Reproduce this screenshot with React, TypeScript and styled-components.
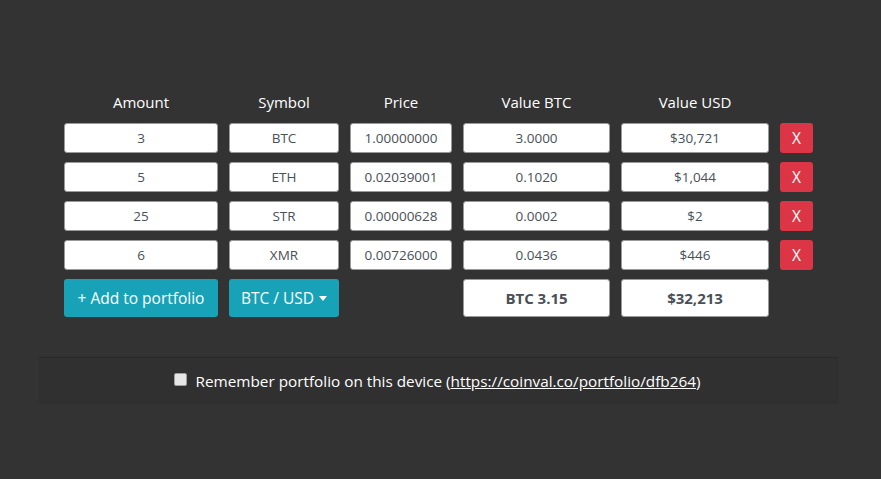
import React from "react";
import styled, { createGlobalStyle } from "styled-components";

const Global = createGlobalStyle`
  html, body { margin: 0; padding: 0; background: #333333; }
  body { font-family: "Open Sans", "Noto Sans", sans-serif; color: #fff; }
`;

const Page = styled.div`
  width: 881px;
  height: 479px;
  background: #333333;
  padding-top: 91px;
  box-sizing: border-box;
`;

const Container = styled.div`
  width: 800px;
  margin-left: 39px;
`;

const Grid = styled.div`
  display: grid;
  grid-template-columns: 154px 110px 102px 147px 148px 33px;
  grid-template-rows: 23px repeat(4, 30px) 38px;
  column-gap: 11px;
  row-gap: 9px;
  margin-left: 25px;
`;

const Header = styled.div`
  text-align: center;
  font-size: 15px;
  line-height: 23px;
  color: #fff;
`;

const Cell = styled.div<{ $bold?: boolean }>`
  background: #fff;
  border: 1px solid #9a9a9a;
  border-radius: 3px;
  box-sizing: border-box;
  display: flex;
  align-items: center;
  justify-content: center;
  color: #495057;
  font-size: ${(p) => (p.$bold ? "15px" : "13.5px")};
  font-weight: ${(p) => (p.$bold ? 700 : 400)};
  height: 100%;
`;

const RemoveButton = styled.button`
  background: #dc3545;
  border: none;
  border-radius: 3px;
  color: #fff;
  font-family: inherit;
  font-size: 15.5px;
  padding: 0;
  height: 100%;
  width: 100%;
  cursor: pointer;
`;

const ActionButton = styled.button`
  background: #17a2b8;
  border: none;
  border-radius: 3px;
  color: #fff;
  font-family: inherit;
  font-size: 15.5px;
  padding: 0;
  height: 38px;
  display: flex;
  align-items: center;
  justify-content: center;
  gap: 5px;
  cursor: pointer;
`;

const Caret = styled.span`
  display: inline-block;
  width: 0;
  height: 0;
  border-left: 4px solid transparent;
  border-right: 4px solid transparent;
  border-top: 5px solid #fff;
  margin-top: 1px;
`;

const TotalCell = styled(Cell)`
  height: 38px;
`;

const Spacer = styled.div``;

const Footer = styled.div`
  margin-top: 40px;
  background: #303030;
  border-top: 1px solid #292929;
  height: 47px;
  display: flex;
  align-items: center;
  justify-content: center;
  font-size: 15.3px;
  color: #fff;
  box-sizing: border-box;
  padding-right: 4px;
`;

const Check = styled.span`
  display: inline-block;
  width: 11px;
  height: 11px;
  background: #e6e6e6;
  border: 1px solid #a0a0a0;
  border-radius: 2px;
  margin-right: 9px;
  margin-top: -3px;
`;

const Link = styled.a`
  color: #fff;
  text-decoration: underline;
`;

const rows = [
  { amount: "3", symbol: "BTC", price: "1.00000000", btc: "3.0000", usd: "$30,721" },
  { amount: "5", symbol: "ETH", price: "0.02039001", btc: "0.1020", usd: "$1,044" },
  { amount: "25", symbol: "STR", price: "0.00000628", btc: "0.0002", usd: "$2" },
  { amount: "6", symbol: "XMR", price: "0.00726000", btc: "0.0436", usd: "$446" },
];

export default function App() {
  return (
    <Page>
      <Global />
      <Container>
        <Grid>
          <Header>Amount</Header>
          <Header>Symbol</Header>
          <Header>Price</Header>
          <Header>Value BTC</Header>
          <Header>Value USD</Header>
          <Spacer />
          {rows.map((r) => (
            <React.Fragment key={r.symbol}>
              <Cell>{r.amount}</Cell>
              <Cell>{r.symbol}</Cell>
              <Cell>{r.price}</Cell>
              <Cell>{r.btc}</Cell>
              <Cell>{r.usd}</Cell>
              <RemoveButton>X</RemoveButton>
            </React.Fragment>
          ))}
          <ActionButton>+ Add to portfolio</ActionButton>
          <ActionButton>
            BTC / USD <Caret />
          </ActionButton>
          <Spacer />
          <TotalCell $bold>BTC 3.15</TotalCell>
          <TotalCell $bold>$32,213</TotalCell>
          <Spacer />
        </Grid>
        <Footer>
          <Check />
          Remember portfolio on this device (
          <Link href="#">https://coinval.co/portfolio/dfb264</Link>)
        </Footer>
      </Container>
    </Page>
  );
}
